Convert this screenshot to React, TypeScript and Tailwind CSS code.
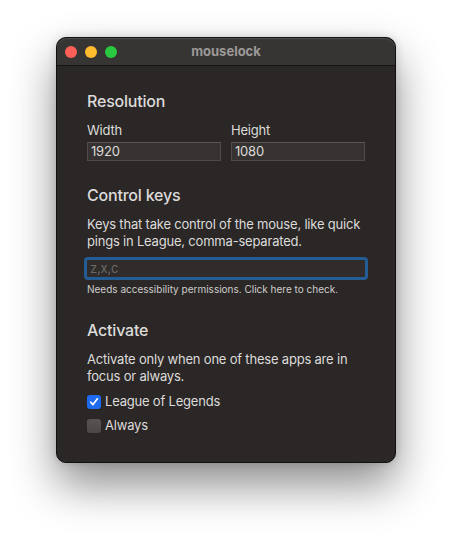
import React from "react";

export default function App() {
  return (
    <div
      className="w-[452px] h-[537px] bg-white pt-[37px] pl-[56px] overflow-hidden"
      style={{ fontFamily: "Inter, 'Noto Sans', sans-serif" }}
    >
      <div className="w-[340px] h-[426px] rounded-[10px] bg-[#2a2726] border border-[#111] shadow-[0_22px_45px_rgba(0,0,0,0.45),0_0_10px_rgba(0,0,0,0.15)] overflow-hidden flex flex-col">
        <div className="h-[28px] shrink-0 bg-[#373533] border-b border-[#141212] flex items-center relative rounded-t-[10px] shadow-[inset_0_1px_0_rgba(255,255,255,0.12)]">
          <div className="flex items-center gap-[8px] pl-[8px]">
            <span className="w-[12px] h-[12px] rounded-full bg-[#fe5f57]" />
            <span className="w-[12px] h-[12px] rounded-full bg-[#febc2e]" />
            <span className="w-[12px] h-[12px] rounded-full bg-[#28c840]" />
          </div>
          <div className="absolute inset-0 flex items-center justify-center text-[13px] font-bold text-[#9b9998] pointer-events-none">
            mouselock
          </div>
        </div>

        <div className="flex flex-col px-[30px] pt-[25px] text-[#dddbda] tracking-[-0.2px]">
          <div className="text-[16px] leading-[20px] font-medium tracking-[-0.2px]">Resolution</div>
          <div className="flex gap-[10px] mt-[11px]">
            <div className="flex flex-col w-[134px]">
              <div className="text-[13px] leading-[16px]">Width</div>
              <div className="mt-[4px] h-[19px] bg-[#353231] border border-[#4d4a49] border-t-[#5a5756] flex items-center px-[3px] text-[13px]">
                1920
              </div>
            </div>
            <div className="flex flex-col w-[134px]">
              <div className="text-[13px] leading-[16px]">Height</div>
              <div className="mt-[4px] h-[19px] bg-[#353231] border border-[#4d4a49] border-t-[#5a5756] flex items-center px-[3px] text-[13px]">
                1080
              </div>
            </div>
          </div>

          <div className="text-[16px] leading-[20px] font-medium mt-[24px] tracking-[-0.2px]">Control keys</div>
          <div className="text-[13px] leading-[17px] mt-[11px] whitespace-nowrap">
            Keys that take control of the mouse, like quick
            <br />
            pings in League, comma-separated.
          </div>
          <div className="mt-[7px] -mx-[3px] h-[23px] rounded-[4px] border-[3px] border-[#245d95] bg-[#2f2c2b] flex items-center px-[3px] text-[13px] text-[#6b6867]">
            z,x,c
          </div>
          <div className="text-[10px] leading-[13px] mt-[3px] text-[#cfcdcc] tracking-[0px] whitespace-nowrap">
            Needs accessibility permissions. Click here to check.
          </div>

          <div className="text-[16px] leading-[20px] font-medium mt-[24px] tracking-[-0.2px]">Activate</div>
          <div className="text-[13px] leading-[17px] mt-[11px] whitespace-nowrap">
            Activate only when one of these apps are in
            <br />
            focus or always.
          </div>
          <div className="flex items-center mt-[9px] h-[16px]">
            <span className="w-[14px] h-[14px] rounded-[3px] bg-[#1f6bf0] flex items-center justify-center">
              <svg width="10" height="10" viewBox="0 0 10 10">
                <path d="M1.8 5.2 L4 7.6 L8.4 1.8" fill="none" stroke="#fff" strokeWidth="1.7" strokeLinecap="round" strokeLinejoin="round" />
              </svg>
            </span>
            <span className="ml-[4px] text-[13px]">League of Legends</span>
          </div>
          <div className="flex items-center mt-[8px] h-[16px]">
            <span className="w-[14px] h-[14px] rounded-[3px] bg-gradient-to-b from-[#575453] to-[#4a4746]" />
            <span className="ml-[4px] text-[13px]">Always</span>
          </div>
        </div>
      </div>
    </div>
  );
}
